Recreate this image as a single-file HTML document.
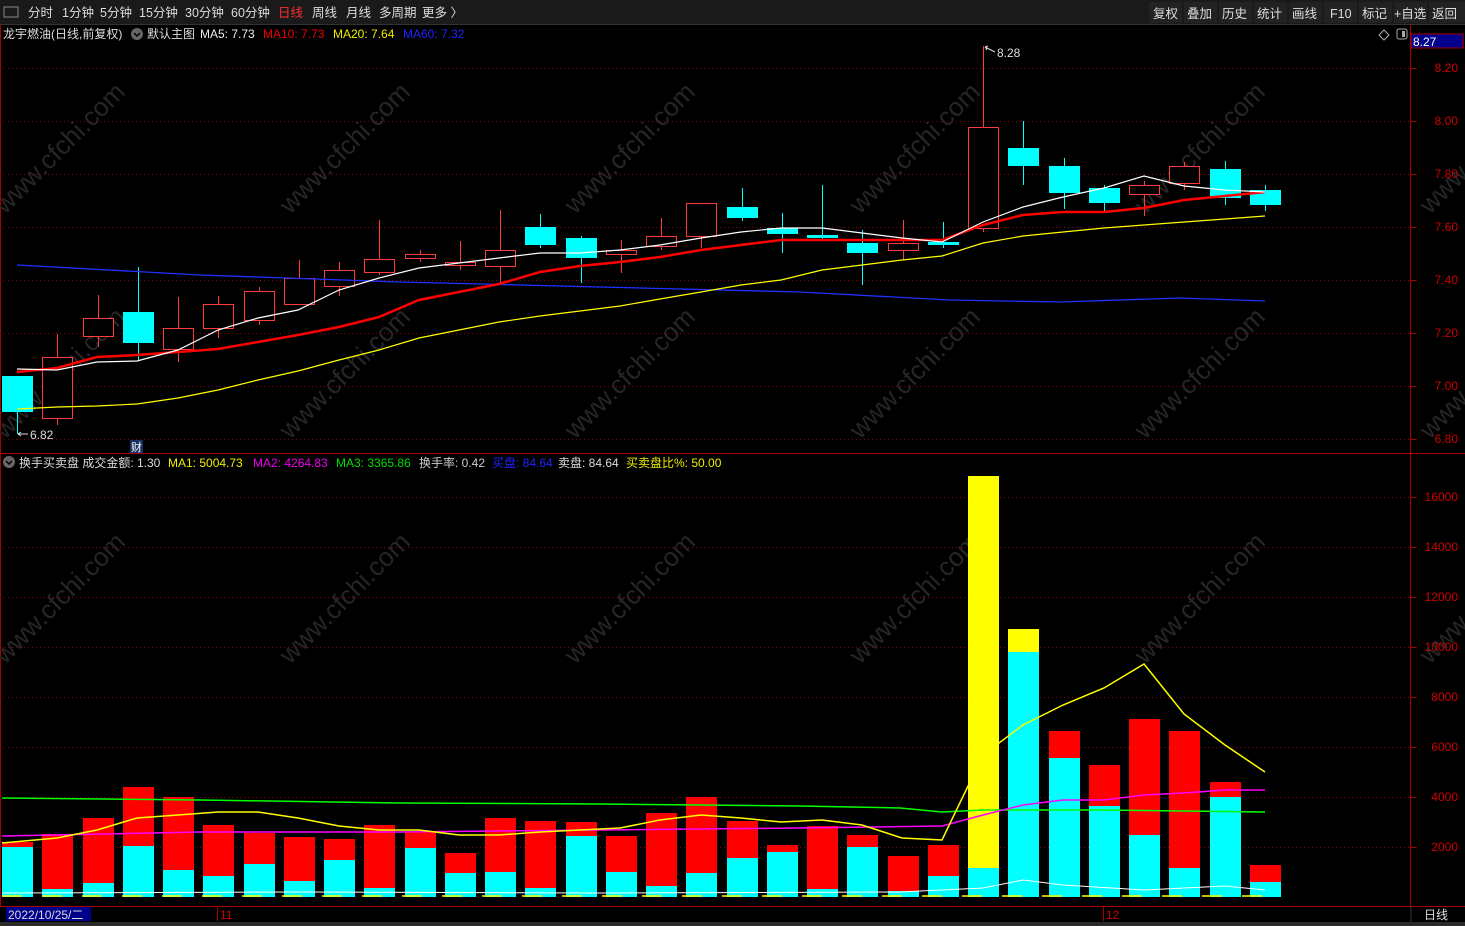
<!DOCTYPE html><html><head><meta charset="utf-8"><style>
body{margin:0;background:#000;width:1465px;height:926px;overflow:hidden;font-family:"Liberation Sans","Noto Sans CJK SC",sans-serif}
svg{position:absolute;left:0;top:0}
</style></head><body>
<svg id="s" width="1465" height="926" xmlns="http://www.w3.org/2000/svg" font-family="Liberation Sans, Noto Sans CJK SC, sans-serif">
<rect x="0" y="0" width="1465" height="24" fill="#1a1a1a"/>
<line x1="0" y1="24.5" x2="1465" y2="24.5" stroke="#333"/>
<rect x="4" y="7" width="14" height="10" fill="none" stroke="#888" stroke-width="1"/>
<g font-size="12.5" fill="#ddd">
<text x="28" y="17">分时</text><text x="62" y="17">1分钟</text><text x="100" y="17">5分钟</text><text x="139" y="17">15分钟</text><text x="185" y="17">30分钟</text><text x="231" y="17">60分钟</text><text x="278" y="17" fill="#ff3030">日线</text><text x="312" y="17">周线</text><text x="346" y="17">月线</text><text x="379" y="17">多周期</text><text x="422" y="17">更多 〉</text>
</g>
<g fill="#222"><rect x="1149" y="2" width="33" height="21"/><rect x="1184" y="2" width="33" height="21"/><rect x="1219" y="2" width="33" height="21"/><rect x="1254" y="2" width="33" height="21"/><rect x="1289" y="2" width="33" height="21"/><rect x="1324" y="2" width="33" height="21"/><rect x="1359" y="2" width="33" height="21"/><rect x="1394" y="2" width="33" height="21"/><rect x="1429" y="2" width="36" height="21"/></g>
<g font-size="12.5" fill="#ddd"><text x="1153" y="18">复权</text><text x="1187" y="18">叠加</text><text x="1222" y="18">历史</text><text x="1257" y="18">统计</text><text x="1292" y="18">画线</text><text x="1330" y="18">F10</text><text x="1362" y="18">标记</text><text x="1394" y="18">+自选</text><text x="1432" y="18">返回</text></g>
<g font-size="12"><text x="3" y="38" fill="#ddd">龙宇燃油(日线,前复权)</text>
<circle cx="137" cy="34" r="6" fill="#666"/><path d="M134 33l3 3 3-3" stroke="#000" fill="none" stroke-width="1.5"/>
<text x="147" y="38" fill="#ddd">默认主图</text><text x="200" y="38" fill="#eee">MA5: 7.73</text><text x="263" y="38" fill="#e00">MA10: 7.73</text><text x="333" y="38" fill="#ee0">MA20: 7.64</text><text x="403" y="38" fill="#22f">MA60: 7.32</text></g>
<path d="M1384 30l5 5-5 5-5-5z" fill="none" stroke="#aaa"/><rect x="1397" y="29" width="10" height="10" rx="2" fill="none" stroke="#aaa"/><rect x="1402" y="31" width="3" height="6" fill="#aaa"/>
<rect x="1411" y="34" width="52" height="14" fill="#00008b" stroke="#a00"/><text x="1413" y="46" font-size="12" fill="#fff">8.27</text>
<line x1="1410.5" y1="25" x2="1410.5" y2="922" stroke="#a00"/>
<line x1="0" y1="453.5" x2="1465" y2="453.5" stroke="#a00"/>
<line x1="0" y1="906.5" x2="1465" y2="906.5" stroke="#a00"/>
<line x1="0.5" y1="25" x2="0.5" y2="906" stroke="#a00"/>
<g id="g"></g>
<g font-size="12"><circle cx="9" cy="462" r="6" fill="#666"/><path d="M6 461l3 3 3-3" stroke="#000" fill="none" stroke-width="1.5"/>
<text x="19" y="467" fill="#ddd">换手买卖盘 成交金额: 1.30</text><text x="168" y="467" fill="#ee0">MA1: 5004.73</text><text x="253" y="467" fill="#e0e">MA2: 4264.83</text><text x="336" y="467" fill="#0d0">MA3: 3365.86</text><text x="419" y="467" fill="#ccc">换手率: 0.42</text><text x="492" y="467" fill="#22f">买盘: 84.64</text><text x="558" y="467" fill="#ddd">卖盘: 84.64</text><text x="626" y="467" fill="#ee0">买卖盘比%: 50.00</text></g>
<rect x="130" y="440" width="13" height="13" fill="#1a3060"/><text x="131" y="451" font-size="11" fill="#fff">财</text>
<rect x="0" y="907" width="1465" height="15" fill="#000"/>
<rect x="6" y="907" width="85" height="14" fill="#00008b"/><text x="8" y="919" font-size="12" fill="#ddd">2022/10/25/二</text>
<line x1="217.5" y1="907" x2="217.5" y2="921" stroke="#a00"/><text x="220" y="919" font-size="12" fill="#c00">11</text>
<line x1="1103.5" y1="907" x2="1103.5" y2="921" stroke="#a00"/><text x="1106" y="919" font-size="12" fill="#c00">12</text>
<line x1="1411" y1="906" x2="1411" y2="922" stroke="#333"/><text x="1424" y="919" font-size="12" fill="#ddd">日线</text>
<rect x="0" y="922" width="1465" height="4" fill="#2a2a2a"/>
</svg>
<script>
var g=document.getElementById('g'),h='';
function L(a,c,w){h+='<polyline fill="none" stroke="'+c+'" stroke-width="'+(w||1)+'" points="'+a.map(function(p){return p.join(',')}).join(' ')+'"/>';}
for(var i=0;i<6;i++)for(var j=0;j<4;j++){var x=5+i*285,y=215+j*225;if(y>880)continue;h+='<text x="'+x+'" y="'+y+'" font-size="26" fill="#262626" transform="rotate(-45 '+x+' '+y+')">www.cfchi.com</text>';}
[68,121,174,227,280,333,386,439].forEach(function(y,i){h+='<line x1="0" y1="'+(y+.5)+'" x2="1410" y2="'+(y+.5)+'" stroke="#8b0000" stroke-dasharray="1,3"/><line x1="1410" y1="'+(y+.5)+'" x2="1416" y2="'+(y+.5)+'" stroke="#a00"/><text x="1458" y="'+(y+4)+'" font-size="12" fill="#c00" text-anchor="end">'+(8.2-i*0.2).toFixed(2)+'</text>';});
[497,547,597,647,697,747,797,847].forEach(function(y,i){h+='<line x1="0" y1="'+(y+.5)+'" x2="1410" y2="'+(y+.5)+'" stroke="#8b0000" stroke-dasharray="1,3"/><line x1="1410" y1="'+(y+.5)+'" x2="1416" y2="'+(y+.5)+'" stroke="#a00"/><text x="1458" y="'+(y+4)+'" font-size="12" fill="#c00" text-anchor="end">'+(16000-i*2000)+'</text>';});
var C=[[0,376,412,376,434],[1,357,418,334,425],[1,318,336,295,347],[0,312,343,267,361],[1,328,349,297,362],[1,304,328,296,338],[1,291,320,287,325],[1,278,304,260,304],[1,270,286,262,296],[1,259,272,220,275],[1,254,258,250,262],[1,262,265,241,270],[1,250,266,210,285],[0,227,245,214,248],[0,238,258,236,283],[1,250,254,240,273],[1,236,246,218,250],[1,203,236,203,248],[0,207,218,188,221],[0,228,234,213,253],[0,235,238,185,240],[0,243,253,230,285],[1,243,250,220,260],[0,242,245,222,248],[1,127,228,46,232],[0,148,166,121,185],[0,166,193,158,209],[0,188,203,185,211],[1,185,194,181,216],[1,166,183,162,190],[0,169,198,161,205],[0,190,205,185,211]];
var X=[];for(i=0;i<32;i++)X.push(Math.round(17+i*40.25));
C.forEach(function(c,i){var x=X[i],col=c[0]?'#ff3b3b':'#00ffff';
h+='<line x1="'+(x+.5)+'" y1="'+c[3]+'" x2="'+(x+.5)+'" y2="'+c[4]+'" stroke="'+col+'"/>';
if(c[0])h+='<rect x="'+(x-15+.5)+'" y="'+(c[1]+.5)+'" width="30" height="'+Math.max(c[2]-c[1],2)+'" fill="#000" stroke="'+col+'"/>';
else h+='<rect x="'+(x-15)+'" y="'+c[1]+'" width="31" height="'+Math.max(c[2]-c[1],3)+'" fill="'+col+'"/>';});
h+='<text x="997" y="57" font-size="12" fill="#ddd">8.28</text><path d="M985 47l10 5M985 47l3 -1M985 47l2 3" stroke="#ddd" fill="none"/>';
h+='<text x="30" y="439" font-size="12" fill="#ddd">6.82</text><path d="M18 434h10M18 434l3-2M18 434l3 2" stroke="#ddd" fill="none"/>';
L([[17,265],[200,275],[400,282],[600,287],[800,292],[950,300],[1060,302],[1180,298],[1265,301]],'#2030ff',1.3);
L([[17,409],[57,407],[97,406],[137,404],[178,398],[218,390],[258,380],[298,371],[339,360],[379,350],[419,338],[459,330],[499,322],[540,316],[580,311],[620,306],[660,299],[701,292],[741,285],[781,280],[822,270],[862,265],[902,260],[942,256],[983,243],[1023,236],[1063,232],[1104,228],[1144,225],[1184,222],[1225,219],[1265,216]],'#ffff00',1.2);
L([[17,372],[57,368],[97,357],[137,355],[178,352],[218,349],[258,342],[298,335],[339,327],[379,317],[419,300],[459,292],[499,284],[540,272],[580,266],[620,262],[660,257],[701,250],[741,245],[781,240],[822,240],[862,240],[902,240],[942,240],[983,225],[1023,215],[1063,212],[1104,212],[1144,208],[1184,200],[1225,196],[1265,192]],'#ff0000',2.5);
L([[17,369],[57,370],[97,362],[137,361],[178,350],[218,330],[258,318],[298,310],[339,290],[379,278],[419,268],[459,263],[499,258],[540,253],[580,253],[620,250],[660,245],[701,238],[741,232],[781,228],[822,228],[862,233],[902,238],[942,242],[983,222],[1023,207],[1063,197],[1104,188],[1144,176],[1184,186],[1225,190],[1265,192]],'#ffffff',1.2);
var V=[[842,847],[834,889],[818,883],[787,846],[797,870],[825,876],[833,864],[837,881],[839,860],[825,888],[832,848],[853,873],[818,872],[821,888],[822,836],[836,872],[813,886],[797,873],[821,858],[845,852],[826,889],[835,847],[856,891],[845,876],[476,868],[629,652],[731,758],[765,806],[719,835],[731,868],[782,797],[865,882]];
V.forEach(function(v,i){var x=X[i]-15;var col=(i==24||i==25)?'#ffff00':'#ff0000';
h+='<rect x="'+x+'" y="'+v[0]+'" width="31" height="'+(897-v[0])+'" fill="'+col+'"/><rect x="'+x+'" y="'+v[1]+'" width="31" height="'+(897-v[1])+'" fill="#00ffff"/>';});
L([[2,798],[200,800],[400,803],[600,804],[800,806],[900,808],[942,812],[983,810],[1100,810],[1265,812]],'#00ff00',1.5);
L([[2,836],[200,832],[400,832],[600,830],[800,828],[942,826],[983,815],[1023,805],[1063,800],[1104,800],[1144,795],[1184,793],[1225,790],[1265,790]],'#ff00ff',1.5);
L([[2,843],[57,838],[97,830],[137,818],[178,815],[218,812],[258,812],[298,818],[339,826],[379,830],[419,830],[459,835],[499,835],[540,832],[580,830],[620,828],[660,820],[701,815],[741,818],[781,822],[822,820],[862,825],[902,838],[942,840],[983,755],[1023,725],[1063,705],[1104,688],[1144,664],[1184,714],[1225,745],[1265,772]],'#ffff00',1.5);
L([[2,893],[300,892],[600,893],[900,892],[983,888],[1023,880],[1063,885],[1144,890],[1225,886],[1265,890]],'#ffffff',1);
h+='<line x1="2" y1="896" x2="1280" y2="896" stroke="#ffff00" stroke-dasharray="20,20" stroke-width="1.5"/>';
g.innerHTML=h;
</script>
</body></html>
